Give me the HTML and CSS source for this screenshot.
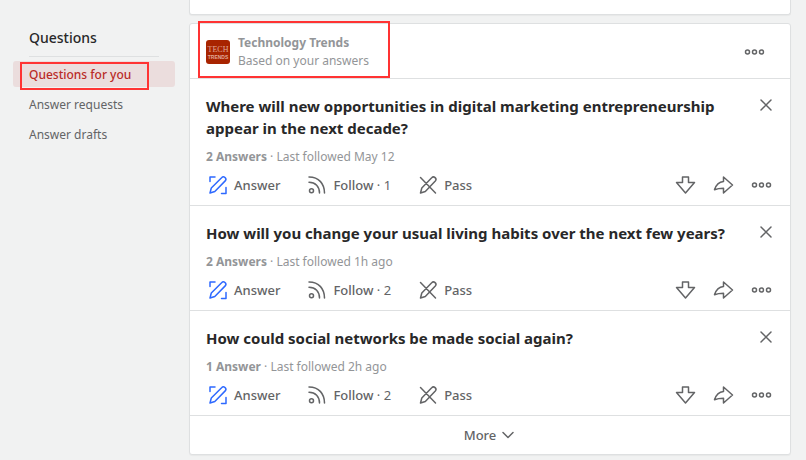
FILE: index.html
```html
<!DOCTYPE html>
<html lang="en">
<head>
    <meta charset="UTF-8">
    <title>Questions for you</title>
    <meta name="viewport" content="width=device-width, initial-scale=1.0">
    <link rel="stylesheet" href="styles.css">
</head>
<body>
    <!-- Shared icons -->
    <svg class="sprite" aria-hidden="true">
        <symbol id="icon-answer" viewBox="0 0 24 24">
            <path d="M4 8.500V4h5M15.500 20.500H20v-6"/>
            <path d="M4 20l1.300-5L15.600 4.700a2.200 2.200 0 0 1 3.600 3.200L8.800 18.500z"/>
        </symbol>
        <symbol id="icon-follow" viewBox="0 0 24 24">
            <circle cx="6.500" cy="17.800" r="2"/>
            <path d="M4 9.300c6.500 0 10.500 4.500 10.500 10.700M4 4c10 0 15.500 7 15.500 16"/>
        </symbol>
        <symbol id="icon-pass" viewBox="0 0 24 24">
            <path d="M4.500 20l1.300-5L15.700 4.800a2.200 2.200 0 0 1 3.600 3.200L9.300 18.500zM4.500 4.500l15 15.500"/>
        </symbol>
        <symbol id="icon-down" viewBox="0 0 24 24">
            <path d="M11.500 20L2.500 9.500h6V4h6v5.500h6z"/>
        </symbol>
        <symbol id="icon-share" viewBox="0 0 24 24">
            <path d="M11.500 4l9 8-9 8v-4.800c-3 0-6 .3-9 1.500C4 12 7 9 11.500 8.500z"/>
        </symbol>
        <symbol id="icon-dots" viewBox="0 0 24 24">
            <circle cx="4.500" cy="12" r="2"/>
            <circle cx="11.500" cy="12" r="2"/>
            <circle cx="18.500" cy="12" r="2"/>
        </symbol>
        <symbol id="icon-close" viewBox="0 0 16 16">
            <path d="M3 3l10 10M13 3L3 13"/>
        </symbol>
        <symbol id="icon-chevron" viewBox="0 0 16 16">
            <path d="M3 5.500l5 5 5-5"/>
        </symbol>
    </svg>

    <div class="page">
        <nav class="sidebar">
            <h2 class="sidebar-title">Questions</h2>
            <ul class="sidebar-list">
                <li class="marked marked-link"><a class="sidebar-link active" href="#">Questions for you</a></li>
                <li><a class="sidebar-link" href="#">Answer requests</a></li>
                <li><a class="sidebar-link" href="#">Answer drafts</a></li>
            </ul>
        </nav>

        <main class="feed">
            <div class="card card-previous"></div>

            <section class="card">
                <header class="topic marked marked-topic">
                    <svg class="topic-logo" viewBox="0 0 24 24" aria-hidden="true">
                        <rect width="24" height="24" rx="3"/>
                        <text class="logo-top" x="12" y="12">TECH</text>
                        <text class="logo-bottom" x="12" y="19">TRENDS</text>
                    </svg>
                    <div class="topic-text">
                        <a class="topic-name" href="#">Technology Trends</a>
                        <span>Based on your answers</span>
                    </div>
                    <button class="icon-button" type="button" aria-label="Topic options"><svg class="icon"><use href="#icon-dots"/></svg></button>
                </header>

                <article class="question">
                    <div class="question-head">
                        <h3><a href="#">Where will new opportunities in digital marketing entrepreneurship appear in the next decade?</a></h3>
                        <button class="icon-button close" type="button" aria-label="Dismiss"><svg class="icon-small"><use href="#icon-close"/></svg></button>
                    </div>
                    <p class="meta"><a href="#">2 Answers</a> · Last followed May 12</p>
                    <div class="actions">
                        <button class="action" type="button"><svg class="icon icon-blue"><use href="#icon-answer"/></svg>Answer</button>
                        <button class="action" type="button"><svg class="icon"><use href="#icon-follow"/></svg><span>Follow <span class="count">· 1</span></span></button>
                        <button class="action" type="button"><svg class="icon"><use href="#icon-pass"/></svg>Pass</button>
                        <div class="actions-end">
                            <button class="icon-button" type="button" aria-label="Downvote"><svg class="icon"><use href="#icon-down"/></svg></button>
                            <button class="icon-button" type="button" aria-label="Share"><svg class="icon"><use href="#icon-share"/></svg></button>
                            <button class="icon-button" type="button" aria-label="More options"><svg class="icon"><use href="#icon-dots"/></svg></button>
                        </div>
                    </div>
                </article>

                <article class="question">
                    <div class="question-head">
                        <h3><a href="#">How will you change your usual living habits over the next few years?</a></h3>
                        <button class="icon-button close" type="button" aria-label="Dismiss"><svg class="icon-small"><use href="#icon-close"/></svg></button>
                    </div>
                    <p class="meta"><a href="#">2 Answers</a> · Last followed 1h ago</p>
                    <div class="actions">
                        <button class="action" type="button"><svg class="icon icon-blue"><use href="#icon-answer"/></svg>Answer</button>
                        <button class="action" type="button"><svg class="icon"><use href="#icon-follow"/></svg><span>Follow <span class="count">· 2</span></span></button>
                        <button class="action" type="button"><svg class="icon"><use href="#icon-pass"/></svg>Pass</button>
                        <div class="actions-end">
                            <button class="icon-button" type="button" aria-label="Downvote"><svg class="icon"><use href="#icon-down"/></svg></button>
                            <button class="icon-button" type="button" aria-label="Share"><svg class="icon"><use href="#icon-share"/></svg></button>
                            <button class="icon-button" type="button" aria-label="More options"><svg class="icon"><use href="#icon-dots"/></svg></button>
                        </div>
                    </div>
                </article>

                <article class="question">
                    <div class="question-head">
                        <h3><a href="#">How could social networks be made social again?</a></h3>
                        <button class="icon-button close" type="button" aria-label="Dismiss"><svg class="icon-small"><use href="#icon-close"/></svg></button>
                    </div>
                    <p class="meta"><a href="#">1 Answer</a> · Last followed 2h ago</p>
                    <div class="actions">
                        <button class="action" type="button"><svg class="icon icon-blue"><use href="#icon-answer"/></svg>Answer</button>
                        <button class="action" type="button"><svg class="icon"><use href="#icon-follow"/></svg><span>Follow <span class="count">· 2</span></span></button>
                        <button class="action" type="button"><svg class="icon"><use href="#icon-pass"/></svg>Pass</button>
                        <div class="actions-end">
                            <button class="icon-button" type="button" aria-label="Downvote"><svg class="icon"><use href="#icon-down"/></svg></button>
                            <button class="icon-button" type="button" aria-label="Share"><svg class="icon"><use href="#icon-share"/></svg></button>
                            <button class="icon-button" type="button" aria-label="More options"><svg class="icon"><use href="#icon-dots"/></svg></button>
                        </div>
                    </div>
                </article>

                <button class="more" type="button">More <svg class="icon-small"><use href="#icon-chevron"/></svg></button>
            </section>
        </main>
    </div>
</body>
</html>
```
FILE: styles.css
```css
*,
*::after {
    box-sizing: border-box;
}

body {
    margin: 0;
    background: #f1f2f2;
    color: #636466;
    font-family: "Noto Sans", "Open Sans", sans-serif;
    font-size: 13px;
    line-height: 18px;
}

a {
    color: inherit;
    text-decoration: none;
}

button {
    padding: 0;
    border: none;
    background: none;
    color: inherit;
    font: inherit;
    cursor: pointer;
}

.sprite {
    display: none;
}

.page {
    display: flex;
    gap: 14px;
    padding: 0 15px 5px 13px;
}

/* Sidebar */
.sidebar {
    flex: none;
    width: 162px;
    padding-top: 20px;
}

.sidebar-title {
    margin: 0 16px 4px;
    padding: 8px 0;
    border-bottom: 1px solid #dee0e1;
    color: #282829;
    font-size: 14px;
    font-weight: 500;
    line-height: 20px;
}

.sidebar-list {
    display: flex;
    flex-direction: column;
    gap: 4px;
    margin: 0;
    padding: 0;
    list-style: none;
}

.sidebar-link {
    display: block;
    padding: 5px 16px 3px;
    border-radius: 3px;
    font-size: 12px;
}

.sidebar-link.active {
    background: #ebdddd;
    color: #b92b27;
    font-weight: 500;
}

/* Feed */
.feed {
    flex: 1;
    min-width: 0;
}

.card {
    border: 1px solid #dee0e1;
    border-radius: 3px;
    background: #fff;
    box-shadow: 0 1px 1px rgba(0, 0, 0, 0.04);
}

.card-previous {
    height: 15px;
    margin-bottom: 8px;
    border-top: none;
    border-radius: 0 0 3px 3px;
}

.topic {
    display: flex;
    align-items: center;
    gap: 8px;
    padding: 9px 23px 8px 16px;
    border-bottom: 1px solid #dee0e1;
    color: #939598;
    font-size: 12px;
}

.topic .icon-button {
    color: #636466;
}

.topic-text {
    display: flex;
    flex: 1;
    flex-direction: column;
    padding-top: 1px;
}

.topic-name {
    font-weight: 700;
}

.topic-logo {
    width: 24px;
    height: 24px;
    fill: #a82400;
}

.topic-logo text {
    fill: #e0a898;
    text-anchor: middle;
}

.logo-top {
    font-family: "Liberation Serif", serif;
    font-size: 8px;
}

.logo-bottom {
    font-family: "Liberation Sans", sans-serif;
    font-size: 5px;
    font-weight: 700;
}

.question {
    padding: 16px 16px 8px;
    border-bottom: 1px solid #dee0e1;
}

.question-head {
    display: flex;
    align-items: flex-start;
    justify-content: space-between;
    gap: 24px;
}

.question h3 {
    margin: 0;
    color: #282829;
    font-size: 15px;
    font-weight: 700;
    line-height: 22px;
}

.meta {
    margin: 8px 0 6px;
    color: #939598;
    font-size: 12px;
    line-height: 20px;
}

.meta a {
    font-weight: 700;
}

.actions {
    display: flex;
    align-items: center;
    gap: 25px;
}

.action {
    display: flex;
    align-items: center;
    gap: 4px;
    font-weight: 500;
}

.count {
    font-weight: 400;
}

.actions-end {
    display: flex;
    gap: 14px;
    margin-left: auto;
}

.icon-button {
    display: flex;
}

.close {
    padding-top: 2px;
}

.more {
    display: flex;
    align-items: center;
    justify-content: center;
    gap: 4px;
    width: 100%;
    padding: 10px;
    font-weight: 500;
}

/* Icons */
.icon,
.icon-small {
    flex: none;
    fill: none;
    stroke: currentColor;
    stroke-width: 1.5;
    stroke-linejoin: round;
    stroke-linecap: round;
}

.icon {
    width: 24px;
    height: 24px;
}

.icon-small {
    width: 16px;
    height: 16px;
}

.icon-blue {
    color: #2e69ff;
}

/* Red callout frames drawn over the page */
.marked {
    position: relative;
}

.marked::after {
    position: absolute;
    border: 2px solid #ff3333;
    content: "";
    pointer-events: none;
}

.marked-link::after {
    top: 1px;
    bottom: -3px;
    left: 7px;
    width: 129px;
}

.marked-topic::after {
    top: -3px;
    bottom: 0;
    left: 8px;
    width: 192px;
}
```
